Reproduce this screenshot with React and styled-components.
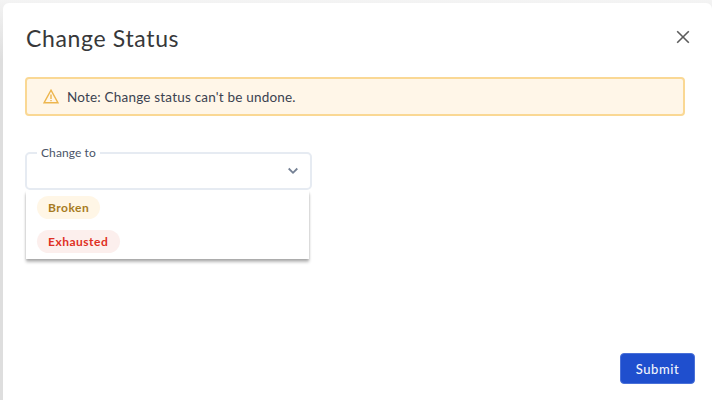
import React from "react";
import styled, { createGlobalStyle } from "styled-components";

const GlobalStyle = createGlobalStyle`
  *, *::before, *::after { box-sizing: border-box; }
  body { margin: 0; overflow: hidden; font-family: Lato, "Open Sans", sans-serif; }
`;

const Backdrop = styled.div`
  height: 400px;
  padding: 3px 0 0 3px;
  background: linear-gradient(#f4f4f4 0, #f1f1f1 6px, #dedede 60px);
`;

const Dialog = styled.main`
  display: flex;
  flex-direction: column;
  height: 397px;
  padding: 20px 17px 16px 22px;
  background: #fff;
  border-radius: 6px 6px 0 0;
`;

const Header = styled.header`
  display: flex;
  justify-content: space-between;
  height: 54px;
  padding: 0 4px 0 1px;
`;

const Title = styled.h1`
  margin: 0;
  font-size: 23px;
  line-height: 30px;
  font-weight: 400;
  letter-spacing: 0.65px;
  color: #37383a;
`;

const CloseButton = styled.button`
  display: flex;
  width: 16px;
  height: 16px;
  margin-top: 6px;
  padding: 0;
  border: 0;
  background: none;
`;

const Notice = styled.div`
  display: flex;
  align-items: center;
  gap: 8px;
  width: 660px;
  height: 39px;
  padding-left: 16px;
  border: 2px solid #fad894;
  border-radius: 4px;
  background: #fff6e8;
  font-size: 13.5px;
  letter-spacing: 0.2px;
  color: #3b4250;
`;

const SelectBox = styled.fieldset`
  display: flex;
  justify-content: flex-end;
  width: 287px;
  height: 45px;
  margin: 29px 0 0;
  padding: 7px 11px 0 10px;
  border: 2px solid #e6ebf2;
  border-radius: 5px;
`;

const SelectLabel = styled.legend`
  padding: 1px 4px 0;
  font-size: 12px;
  line-height: 14px;
  letter-spacing: 0.1px;
  color: #4a5468;
`;

const Menu = styled.ul`
  display: flex;
  flex-direction: column;
  align-items: flex-start;
  gap: 11px;
  width: 283px;
  height: 68px;
  margin: 1px 0 0 1px;
  padding: 5px 11px;
  list-style: none;
  box-shadow: 0 3px 3px rgba(0, 0, 0, 0.28), 0 1px 2px rgba(0, 0, 0, 0.12);
  clip-path: inset(0 -6px -8px -6px);
`;

const Chip = styled.li`
  display: flex;
  align-items: center;
  height: 23px;
  padding: 0 11px;
  border-radius: 12px;
  font-size: 12px;
  font-weight: 700;
  letter-spacing: 0.5px;
  ${({ $tone }) =>
    $tone === "danger"
      ? "width: 83px; background: #fcefed; color: #df3024;"
      : "width: 63px; background: #fff6e6; color: #a77b22;"}
`;

const Footer = styled.footer`
  display: flex;
  justify-content: flex-end;
  margin-top: auto;
`;

const SubmitButton = styled.button`
  width: 75px;
  height: 31px;
  padding: 0;
  border: 1px solid #4970d8;
  border-radius: 4px;
  background: #1f4fce;
  color: #f1f4fc;
  font: 500 13px Lato, sans-serif;
  letter-spacing: 0.6px;
`;

function CloseIcon() {
  return (
    <svg width="16" height="16" viewBox="0 0 16 16" fill="none" stroke="#5c5c5c" strokeWidth="1.6">
      <path d="M2.2 2.2 13.8 13.8M13.8 2.2 2.2 13.8" />
    </svg>
  );
}

function WarningIcon() {
  return (
    <svg width="16" height="15" viewBox="0 0 16 15" fill="none" stroke="#edb64e" strokeWidth="1.4">
      <path d="M8 1.2 15 13.8H1ZM8 5.5V10M8 11V12.3" />
    </svg>
  );
}

function ChevronIcon() {
  return (
    <svg width="12" height="8" viewBox="0 0 12 8" fill="none" stroke="#748094" strokeWidth="1.8">
      <path d="M1.7 1.5 6 5.8 10.3 1.5" />
    </svg>
  );
}

export default function App() {
  return (
    <>
      <GlobalStyle />
      <Backdrop>
        <Dialog>
          <Header>
            <Title>Change Status</Title>
            <CloseButton aria-label="Close"><CloseIcon /></CloseButton>
          </Header>
          <Notice>
            <WarningIcon />
            <span>Note: Change status can't be undone.</span>
          </Notice>
          <SelectBox>
            <SelectLabel>Change to</SelectLabel>
            <ChevronIcon />
          </SelectBox>
          <Menu>
            <Chip>Broken</Chip>
            <Chip $tone="danger">Exhausted</Chip>
          </Menu>
          <Footer>
            <SubmitButton>Submit</SubmitButton>
          </Footer>
        </Dialog>
      </Backdrop>
    </>
  );
}
